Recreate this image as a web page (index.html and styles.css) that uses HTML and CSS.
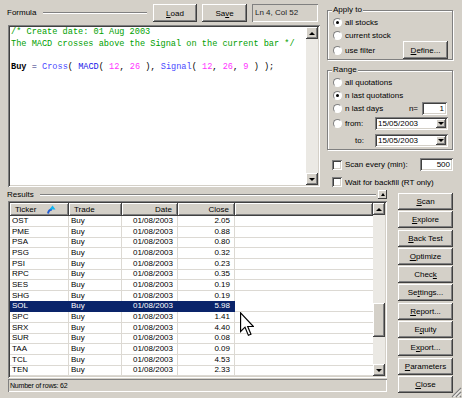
FILE: index.html
```html
<!DOCTYPE html>
<html lang="en">
<head>
  <meta charset="UTF-8" />
  <meta name="viewport" content="width=device-width, initial-scale=1" />
  <title>Automatic Analysis</title>
  <link rel="stylesheet" href="styles.css">
</head>
<body>
  <div id="analysis">
    <div class="top">
      <section class="formula">
        <div class="formula-head">
          <span class="caption">Formula</span>
          <span class="groove"></span>
          <button class="btn btn-load"><u>L</u>oad</button>
          <button class="btn btn-save">Sa<u>v</u>e</button>
          <div class="pos-box">Ln 4, Col 52</div>
        </div>
        <div class="editor">
<pre class="code"><span class="cm">/* Create date: 01 Aug 2003
The MACD crosses above the Signal on the current bar */</span>

<b>Buy</b> <span class="op">=</span> <span class="fn">Cross</span>( <span class="fn2">MACD</span>( <span class="num">12</span>, <span class="num">26</span> ), <span class="fn">Signal</span>( <span class="num">12</span>, <span class="num">26</span>, <span class="num">9</span> ) );</pre>
          <div class="vscroll">
            <span class="arrow up"></span>
            <span class="track"></span>
            <span class="arrow down"></span>
          </div>
        </div>
      </section>

      <aside class="options">
        <fieldset class="group apply">
          <legend>Apply to</legend>
          <div class="opt r1"><span class="radio on"></span>all stocks</div>
          <div class="opt r2"><span class="radio"></span>current stock</div>
          <div class="opt r3"><span class="radio"></span>use filter
            <button class="btn btn-define"><u>D</u>efine...</button>
          </div>
        </fieldset>

        <fieldset class="group range">
          <legend>Range</legend>
          <div class="opt q1"><span class="radio"></span>all quotations</div>
          <div class="opt q2"><span class="radio on"></span>n last quotations</div>
          <div class="opt q3"><span class="radio"></span>n last days
            <span class="n-label">n=</span>
            <span class="field n-field">1</span>
          </div>
          <div class="opt q4"><span class="radio"></span>from:
            <span class="combo"><span class="combo-text">15/05/2003</span><span class="drop"></span></span>
          </div>
          <div class="opt q5"><span class="to-label">to:</span>
            <span class="combo"><span class="combo-text">15/05/2003</span><span class="drop"></span></span>
          </div>
        </fieldset>

        <div class="check-row scan"><span class="check"></span>Scan every (min):
          <span class="field scan-field">500</span>
        </div>
        <div class="check-row wait"><span class="check"></span>Wait for backfill (RT only)</div>
      </aside>
    </div>

    <div class="bottom">
      <section class="results">
        <div class="results-head">
          <span class="caption">Results</span>
          <span class="groove"></span>
          <span class="mini-btn"><span class="tri"></span></span>
        </div>
        <div class="list">
          <div class="grid">
            <div class="list-header">
              <span class="hcell">Ticker
                <svg class="sort-icon" width="10" height="9" viewBox="0 0 10 9">
                  <path d="M2 8.5 C2.5 5.5 4 4.5 6 4.5" fill="none" stroke="#1f5bd6" stroke-width="2"/>
                  <path d="M6.5 0.5 L9.5 4.5 L3.5 4.5 Z" fill="#12b4f0"/>
                </svg>
              </span>
              <span class="hcell">Trade</span>
              <span class="hcell right">Date</span>
              <span class="hcell right">Close</span>
              <span class="hcell"></span>
            </div>
            <div class="rows">
              <div class="row"><span>OST</span><span>Buy</span><span class="right">01/08/2003</span><span class="right">2.05</span><span></span></div>
              <div class="row"><span>PME</span><span>Buy</span><span class="right">01/08/2003</span><span class="right">0.88</span><span></span></div>
              <div class="row"><span>PSA</span><span>Buy</span><span class="right">01/08/2003</span><span class="right">0.80</span><span></span></div>
              <div class="row"><span>PSG</span><span>Buy</span><span class="right">01/08/2003</span><span class="right">0.32</span><span></span></div>
              <div class="row"><span>PSI</span><span>Buy</span><span class="right">01/08/2003</span><span class="right">0.23</span><span></span></div>
              <div class="row"><span>RPC</span><span>Buy</span><span class="right">01/08/2003</span><span class="right">0.35</span><span></span></div>
              <div class="row"><span>SES</span><span>Buy</span><span class="right">01/08/2003</span><span class="right">0.19</span><span></span></div>
              <div class="row"><span>SHG</span><span>Buy</span><span class="right">01/08/2003</span><span class="right">0.19</span><span></span></div>
              <div class="row selected"><span>SOL</span><span>Buy</span><span class="right">01/08/2003</span><span class="right">5.98</span><span></span></div>
              <div class="row"><span>SPC</span><span>Buy</span><span class="right">01/08/2003</span><span class="right">1.41</span><span></span></div>
              <div class="row"><span>SRX</span><span>Buy</span><span class="right">01/08/2003</span><span class="right">4.40</span><span></span></div>
              <div class="row"><span>SUR</span><span>Buy</span><span class="right">01/08/2003</span><span class="right">0.08</span><span></span></div>
              <div class="row"><span>TAA</span><span>Buy</span><span class="right">01/08/2003</span><span class="right">0.09</span><span></span></div>
              <div class="row"><span>TCL</span><span>Buy</span><span class="right">01/08/2003</span><span class="right">4.53</span><span></span></div>
              <div class="row"><span>TEN</span><span>Buy</span><span class="right">01/08/2003</span><span class="right">2.33</span><span></span></div>
            </div>
          </div>
          <div class="vscroll list-scroll">
            <span class="arrow up"></span>
            <span class="track"><span class="thumb"></span></span>
            <span class="arrow down"></span>
          </div>
        </div>
        <div class="status">Number of rows: 62</div>
      </section>

      <nav class="actions">
        <button class="btn"><u>S</u>can</button>
        <button class="btn"><u>E</u>xplore</button>
        <button class="btn"><u>B</u>ack Test</button>
        <button class="btn"><u>O</u>ptimize</button>
        <button class="btn">Chec<u>k</u></button>
        <button class="btn">Se<u>t</u>tings...</button>
        <button class="btn"><u>R</u>eport...</button>
        <button class="btn">E<u>q</u>uity</button>
        <button class="btn">E<u>x</u>port...</button>
        <button class="btn"><u>P</u>arameters</button>
        <button class="btn"><u>C</u>lose</button>
      </nav>
    </div>

    <!-- mouse pointer and size grip sit over the dialog -->
    <svg class="cursor" width="14" height="25" viewBox="0 0 12 21">
      <path d="M0.5 0.5 V16.5 L4.3 12.8 L7.2 19.8 L9.4 18.9 L6.6 12.2 H11.5 Z" fill="#fff" stroke="#000" stroke-width="1"/>
    </svg>
    <svg class="grip" width="11" height="11" viewBox="0 0 11 11">
      <path d="M10 1 L1 10 M10 5 L5 10 M10 9 L9 10" stroke="#808080" stroke-width="1.2"/>
      <path d="M10 2.5 L2.5 10 M10 6.5 L6.5 10" stroke="#fff" stroke-width="1"/>
    </svg>
  </div>
</body>
</html>
```

FILE: styles.css
```css
* {
  box-sizing: border-box;
}

body {
  margin: 0;
  background: #d4d0c8;
  font-family: "Liberation Sans", Arial, sans-serif;
  font-size: 8px;
  color: #000;
  overflow: hidden;
}

#analysis {
  position: relative;
  width: 462px;
  height: 398px;
}

/* classic 3d controls */
.btn {
  font: inherit;
  color: #000;
  border: none;
  padding: 0;
  background: #d4d0c8;
  box-shadow: inset -1px -1px #404040, inset 1px 1px #fff, inset -2px -2px #808080;
  height: 18px;
  cursor: default;
}

.btn u {
  text-decoration: underline;
}

.caption {
  line-height: 10px;
  margin-left: -1px;
}

.groove {
  flex: 1;
  height: 2px;
  border-top: 1px solid #808080;
  border-bottom: 1px solid #fff;
}

/* ---------- top part ---------- */
.top {
  display: flex;
  height: 188px;
}

.formula {
  width: 322px;
  padding: 0 2px 0 8px;
}

.formula-head {
  display: flex;
  align-items: center;
  height: 25px;
  padding: 2px 0 1px;
}

.formula-head .groove {
  margin: 0 6px 0 7px;
}

.btn-load { width: 44px; }
.btn-save { width: 45px; margin-left: 5px; }

.pos-box {
  width: 66px;
  height: 18px;
  margin: 0 2px 0 5px;
  padding-left: 3px;
  line-height: 18px;
  color: #222;
  box-shadow: inset 1px 1px #808080, inset -1px -1px #fff;
}

.editor {
  display: flex;
  height: 162px;
  padding: 2px;
  background: #fff;
  box-shadow: inset 1px 1px #808080, inset -1px -1px #fff, inset 2px 2px #404040, inset -2px -2px #d4d0c8;
}

.code {
  flex: 1;
  margin: 0;
  padding: 0 0 0 1px;
  font-family: "Liberation Mono", "Courier New", monospace;
  font-size: 8.6px;
  line-height: 11.67px;
  color: #000;
}

.code .cm { color: #00a000; }
.code b { font-weight: bold; }
.code .op { color: #2a2a80; }
.code .fn { color: #4a4aff; }
.code .fn2 { color: #1515e8; }
.code .num { color: #ff33ff; }

.vscroll {
  display: flex;
  flex-direction: column;
  width: 12px;
}

.vscroll .track {
  flex: 1;
  background: #ebe9e4;
  position: relative;
}

.arrow {
  display: flex;
  align-items: center;
  justify-content: center;
  width: 12px;
  height: 12px;
  background: #d4d0c8;
  box-shadow: inset -1px -1px #404040, inset 1px 1px #fff, inset -2px -2px #808080;
}

.arrow::after {
  content: "";
  width: 0;
  height: 0;
  border-left: 3px solid transparent;
  border-right: 3px solid transparent;
}

.arrow.up::after { border-bottom: 3px solid #000; }
.arrow.down::after { border-top: 3px solid #000; }

/* ---------- options ---------- */
.options {
  width: 131px;
  padding-left: 5px;
}

.group {
  margin: 5px 0 0;
  padding: 1px 4px 0 5px;
  border: 1px solid #808080;
  box-shadow: inset 1px 1px #fff, 1px 1px #fff;
  min-width: 0;
}

.group legend {
  padding: 0 1px;
  margin-left: -1px;
  line-height: 10px;
  background: #d4d0c8;
}

.opt {
  display: flex;
  align-items: center;
  white-space: nowrap;
}

.apply .r1 { height: 13px; }
.apply .r2 { height: 12px; }
.apply .r3 { height: 18px; }

.range .q1 { height: 12px; }
.range .q2 { height: 14px; }
.range .q3 { height: 13px; }
.range .q4 { height: 17px; }
.range .q5 { height: 17px; }

.radio {
  position: relative;
  width: 9px;
  height: 9px;
  margin-right: 3px;
  border-radius: 50%;
  background: #fff;
  border: 1px solid;
  border-color: #808080 #fff #fff #808080;
  flex: none;
}

.radio.on::after {
  content: "";
  position: absolute;
  left: 2px;
  top: 2px;
  width: 3px;
  height: 3px;
  border-radius: 50%;
  background: #000;
}

.btn-define {
  width: 45px;
  margin-left: auto;
}

.n-label {
  margin-left: auto;
  margin-right: 4px;
}

.field {
  display: block;
  height: 13px;
  padding-right: 3px;
  line-height: 13px;
  text-align: right;
  background: #fff;
  box-shadow: inset 1px 1px #808080, inset -1px -1px #fff, inset 2px 2px #404040, inset -2px -2px #d4d0c8;
}

.n-field {
  width: 25px;
  margin-right: 1px;
}

.to-label {
  padding-left: 22px;
}

.combo {
  display: flex;
  width: 73px;
  height: 13px;
  margin-left: auto;
  padding: 2px;
  background: #fff;
  box-shadow: inset 1px 1px #808080, inset -1px -1px #fff, inset 2px 2px #404040, inset -2px -2px #d4d0c8;
}

.combo-text {
  flex: 1;
  padding-left: 1px;
  line-height: 9px;
}

.drop {
  display: flex;
  align-items: center;
  justify-content: center;
  width: 10px;
  background: #d4d0c8;
  box-shadow: inset -1px -1px #404040, inset 1px 1px #fff, inset -2px -2px #808080;
}

.drop::after {
  content: "";
  border-left: 3px solid transparent;
  border-right: 3px solid transparent;
  border-top: 3px solid #000;
}

.check-row {
  display: flex;
  align-items: center;
  padding-left: 5px;
  white-space: nowrap;
}

.check-row.scan {
  height: 13px;
  margin-top: 8px;
}

.check-row.wait {
  height: 12px;
  margin-top: 5px;
}

.check {
  width: 10px;
  height: 10px;
  margin-right: 3px;
  background: #fff;
  box-shadow: inset 1px 1px #808080, inset -1px -1px #fff, inset 2px 2px #404040, inset -2px -2px #d4d0c8;
  flex: none;
}

.scan-field {
  width: 33px;
  margin-left: auto;
}

/* ---------- results ---------- */
.bottom {
  display: flex;
  height: 210px;
}

.results {
  width: 387px;
  padding-left: 8px;
}

.results-head {
  display: flex;
  align-items: center;
  height: 13px;
}

.results-head .groove {
  margin: 0 2px 0 6px;
}

.mini-btn {
  display: flex;
  align-items: center;
  justify-content: center;
  width: 9px;
  height: 9px;
  background: #d4d0c8;
  box-shadow: inset -1px -1px #404040, inset 1px 1px #fff;
}

.mini-btn .tri {
  border-left: 2.5px solid transparent;
  border-right: 2.5px solid transparent;
  border-bottom: 3px solid #000;
}

.list {
  display: flex;
  height: 177px;
  padding: 2px;
  background: #fff;
  box-shadow: inset 1px 1px #808080, inset -1px -1px #fff, inset 2px 2px #404040, inset -2px -2px #d4d0c8;
}

.grid {
  flex: 1;
  overflow: hidden;
}

.list-header,
.row {
  display: grid;
  grid-template-columns: 59px 53px 56px 57px 1fr;
}

.list-header {
  height: 13px;
}

.hcell {
  display: flex;
  align-items: center;
  padding: 0 5px;
  background: #d4d0c8;
  box-shadow: inset -1px -1px #404040, inset 1px 1px #fff, inset -2px -2px #808080;
}

.hcell.right {
  justify-content: flex-end;
  padding-right: 6px;
}

.sort-icon {
  margin-left: 10px;
}

.rows {
  height: 160px;
}

.row {
  height: 10.67px;
  line-height: 10px;
}

.row span {
  padding-left: 2px;
  border-right: 1px solid #dcd9d3;
  border-bottom: 1px solid #dcd9d3;
  white-space: nowrap;
}

.row span.right {
  text-align: right;
  padding-right: 4px;
}

.row span:last-child {
  border-right: none;
}

.row.selected span {
  background: #0a246a;
  color: #fff;
  border-color: #0a246a;
}

.row.selected span:last-child {
  background: #fff;
  border-bottom-color: #dcd9d3;
}

.list-scroll .thumb {
  position: absolute;
  left: 0;
  top: 88px;
  width: 12px;
  height: 34px;
  background: #d4d0c8;
  box-shadow: inset -1px -1px #404040, inset 1px 1px #fff, inset -2px -2px #808080;
}

.status {
  height: 13px;
  margin-top: 1px;
  padding-left: 2px;
  font-size: 7px;
  letter-spacing: -0.2px;
  line-height: 13px;
  box-shadow: inset 1px 1px #808080, inset -1px -1px #fff;
}

/* ---------- action buttons ---------- */
.actions {
  display: flex;
  flex-direction: column;
  gap: 1.3px;
  width: 55px;
  margin-left: 11px;
  padding-top: 5px;
}

.actions .btn {
  height: 17px;
}

.cursor {
  position: absolute;
  left: 240px;
  top: 312px;
}

.grip {
  position: absolute;
  right: 0;
  bottom: 0;
}
```
